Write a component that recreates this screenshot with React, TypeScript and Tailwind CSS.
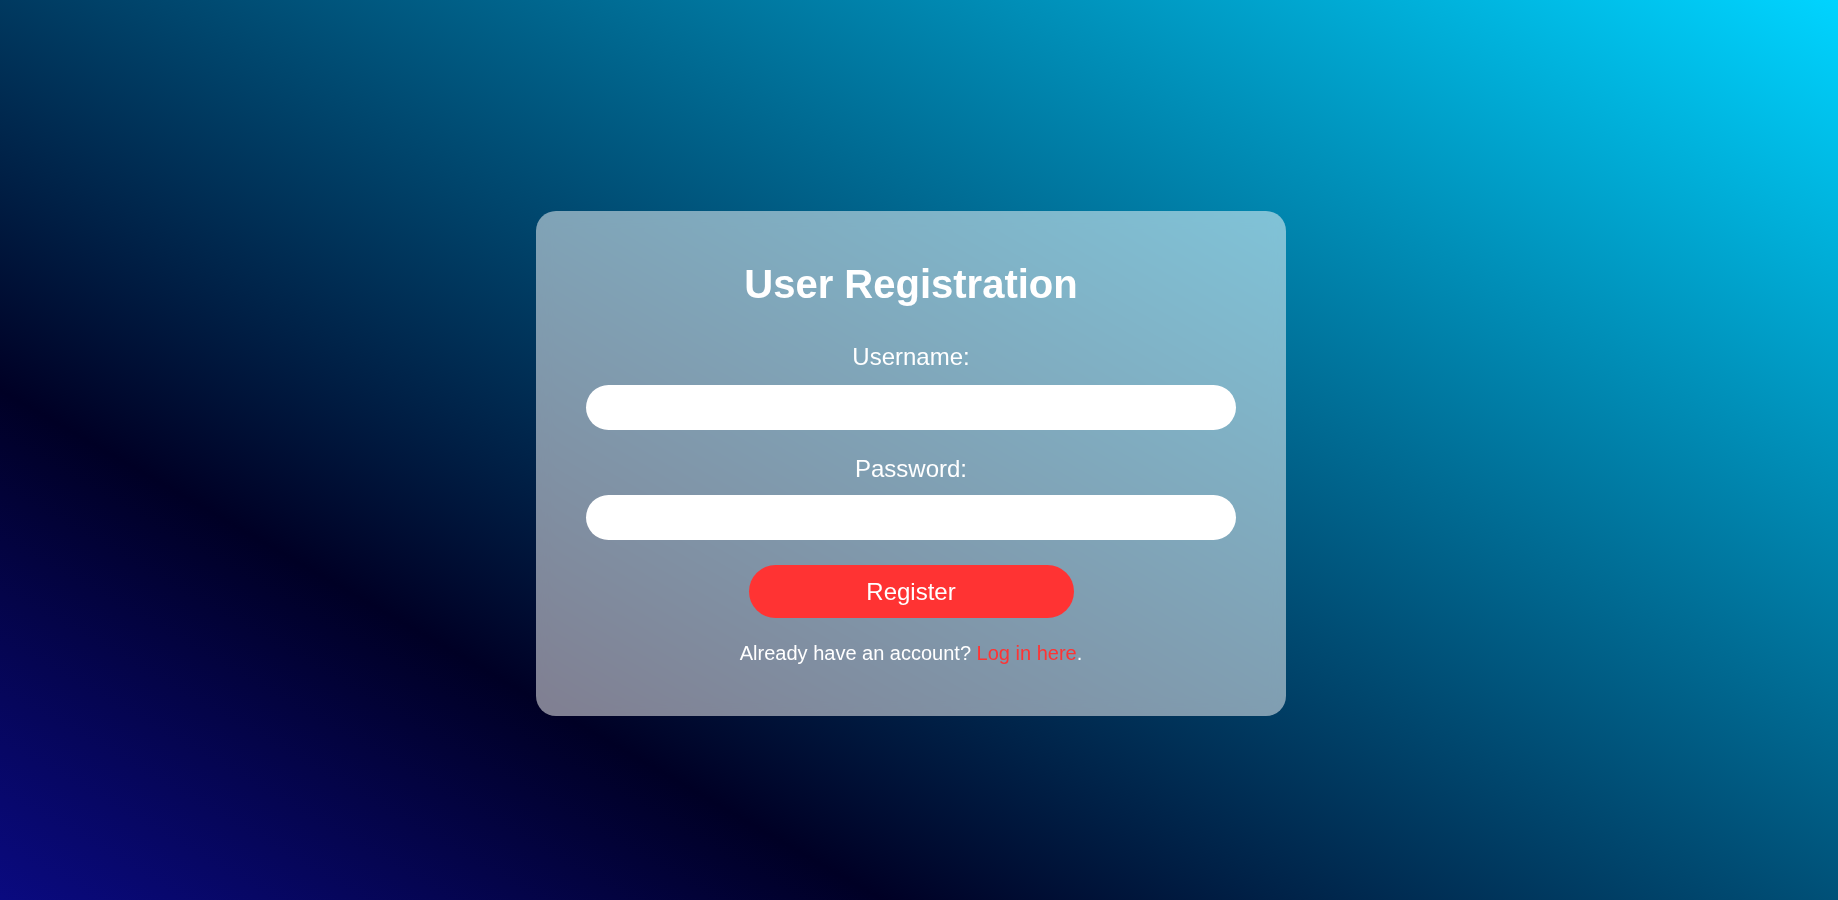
import { useState } from 'react'

export default function App() {
  const [username, setUsername] = useState('')
  const [password, setPassword] = useState('')

  return (
    <div className="min-h-screen w-full flex items-center justify-center pt-[27px] pr-[16px] bg-[linear-gradient(30deg,#0a0a80_0%,#000025_26%,#00d4ff_100%)] font-['Liberation_Sans',Arial,sans-serif]">
      <form
        onSubmit={(e) => e.preventDefault()}
        className="w-[750px] rounded-[20px] bg-white/50 backdrop-blur-sm px-[50px] pt-[50px] pb-[51px] flex flex-col items-center text-white"
      >
        <h2 className="text-[40px] leading-[46px] font-bold mb-[36px]">User Registration</h2>

        <label htmlFor="username" className="text-[24px] leading-[28px] mb-[14px]">
          Username:
        </label>
        <input
          id="username"
          type="text"
          value={username}
          onChange={(e) => setUsername(e.target.value)}
          className="w-full h-[45px] rounded-full bg-white px-5 text-[20px] text-black outline-none mb-[25px]"
        />

        <label htmlFor="password" className="text-[24px] leading-[28px] mb-[12px]">
          Password:
        </label>
        <input
          id="password"
          type="password"
          value={password}
          onChange={(e) => setPassword(e.target.value)}
          className="w-full h-[45px] rounded-full bg-white px-5 text-[20px] text-black outline-none mb-[25px]"
        />

        <button
          type="submit"
          className="w-[325px] h-[53px] rounded-full bg-[#ff3333] text-white text-[24px] leading-[28px]"
        >
          Register
        </button>

        <p className="mt-[24px] text-[20px] leading-[23px]">
          Already have an account? <a href="#" className="text-[#ff3333]">Log in here</a>.
        </p>
      </form>
    </div>
  )
}
